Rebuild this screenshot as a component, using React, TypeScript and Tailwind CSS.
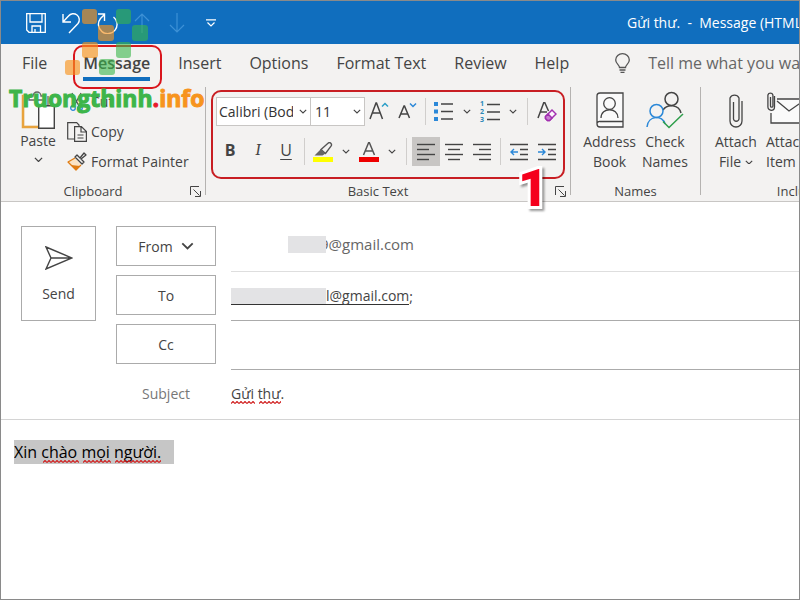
import type { ReactNode } from 'react'
import clsx from 'clsx'

const tabs = ['File', 'Message', 'Insert', 'Options', 'Format Text', 'Review', 'Help']

function Chevron({ className = 'w-[9px]' }: { className?: string }) {
  return (
    <svg viewBox="0 0 10 6" className={className} fill="none" stroke="#444" strokeWidth="1.4" aria-hidden="true">
      <path d="M1 1l4 4 4-4" />
    </svg>
  )
}

function Squiggle({ className }: { className: string }) {
  return (
    <svg className={clsx('absolute h-[3px]', className)} aria-hidden="true">
      <defs>
        <pattern id="squiggle" width="4" height="3" patternUnits="userSpaceOnUse">
          <path d="M0 2.5L2 .5l2 2" fill="none" stroke="#d02020" strokeWidth="1.2" />
        </pattern>
      </defs>
      <rect width="100%" height="3" fill="url(#squiggle)" />
    </svg>
  )
}

function Tool({ label, active, narrow, children }: { label: string; active?: boolean; narrow?: boolean; children: ReactNode }) {
  return (
    <button
      type="button"
      aria-label={label}
      className={clsx(
        'flex h-[29px] shrink-0 items-center justify-center text-[#444]',
        narrow ? 'w-[18px]' : 'w-7',
        active && 'bg-[#c8c6c4]'
      )}
    >
      {children}
    </button>
  )
}

function Divider({ wide }: { wide?: boolean }) {
  return <div className={clsx('h-[27px] w-px shrink-0 bg-[#d0cecc]', wide ? 'mx-[5px]' : 'mx-1')} />
}

function Lines({ rows }: { rows: [number, number][] }) {
  return (
    <svg width="18" height="18" viewBox="0 0 18 18" stroke="#444" strokeWidth="1.4" aria-hidden="true">
      {rows.map(([from, to], i) => (
        <path key={i} d={`M${from} ${1.5 + i * 5}H${to}`} />
      ))}
    </svg>
  )
}

function Group({ label, launcher, className, children }: { label: string; launcher?: boolean; className?: string; children: ReactNode }) {
  return (
    <section className={clsx('relative flex shrink-0 flex-col', className)} aria-label={label}>
      <div className="h-24">{children}</div>
      <div className={clsx('flex h-[18px] items-start justify-center text-[13px] leading-4 text-[#444]', launcher && 'pr-5')}>
        {label}
        {launcher && (
          <button type="button" aria-label={`${label} settings`} className="absolute right-1 bottom-1">
            <svg width="11" height="11" viewBox="0 0 11 11" fill="none" stroke="#444" aria-hidden="true">
              <path d="M.5 9V.5H9M3.5 3.5l6 6M10.5 5v5.5H5" />
            </svg>
          </button>
        )}
      </div>
    </section>
  )
}

function GroupLine() {
  return <div className="mb-1.5 w-px shrink-0 bg-[#b5b3b1]" />
}

function TitleBar() {
  return (
    <header className="flex h-[43px] items-center justify-between bg-[#106ebe] text-white">
      <div className="flex items-center pl-[25px]">
        <button type="button" aria-label="Save" className="w-[35px]">
          <svg width="20" height="20" viewBox="0 0 20 20" fill="none" stroke="white" strokeWidth="1.3" aria-hidden="true">
            <path d="M.7.7h18.6v18.6H3L.7 17zM4 1v8h12V1M6 19v-6h8.500v6M9 16v3" />
          </svg>
        </button>
        <button type="button" aria-label="Undo" className="w-[35px]">
          <svg width="20" height="22" viewBox="0 0 20 22" fill="none" stroke="white" strokeWidth="1.4" aria-hidden="true">
            <path d="M2 2v8h8M2 10l5.500-6a6 6 0 0 1 9.500 7.500L8 21" />
          </svg>
        </button>
        <button type="button" aria-label="Redo" className="w-[38px]">
          <svg width="22" height="22" viewBox="0 0 22 22" fill="none" stroke="white" strokeWidth="1.4" aria-hidden="true">
            <path d="M2 2h6.500v7M8.500 2.500L4.500 6.500A9.300 9.300 0 1 0 17.500 5" />
          </svg>
        </button>
        <button type="button" aria-label="Previous item" className="w-[35px]">
          <svg width="16" height="20" viewBox="0 0 16 20" fill="none" stroke="#3d91d6" strokeWidth="1.2" aria-hidden="true">
            <path d="M8 20V1M1 8l7-7 7 7" />
          </svg>
        </button>
        <button type="button" aria-label="Next item" className="w-[37px]">
          <svg width="16" height="20" viewBox="0 0 16 20" fill="none" stroke="#3d91d6" strokeWidth="1.2" aria-hidden="true">
            <path d="M8 0v19M1 12l7 7 7-7" />
          </svg>
        </button>
        <button type="button" aria-label="Customize toolbar">
          <svg width="10" height="8" viewBox="0 0 10 8" fill="none" stroke="white" strokeWidth="1.2" aria-hidden="true">
            <path d="M0 .8h10M1.500 3.500L5 7l3.500-3.500" />
          </svg>
        </button>
      </div>
      <h1 className="w-[172px] overflow-hidden text-[14px] whitespace-pre">Gửi thư.  -  Message (HTML)</h1>
    </header>
  )
}

function Tabs() {
  return (
    <nav className="flex h-[43px] items-center pl-[21px] text-[16px] leading-5 whitespace-nowrap text-[#444]">
      <div className="flex items-center gap-7">
        {tabs.map((tab) => (
          <button key={tab} type="button" className={clsx('relative pb-1.5', tab === 'Message' && 'ml-2 font-semibold')}>
            {tab}
            {tab === 'Message' && <span className="absolute inset-x-0 -bottom-0.5 h-1 bg-[#106ebe]" />}
            {tab === 'Message' && (
              <span className="absolute -top-2 -right-3 -bottom-2.5 -left-2.5 rounded-[10px] border-2 border-[#d9151c]" />
            )}
          </button>
        ))}
      </div>
      <button type="button" className="ml-[46px] flex items-center gap-[18px] pb-1.5 text-[#666]">
        <svg width="15" height="20" viewBox="0 0 15 20" fill="none" stroke="#555" strokeWidth="1.3" aria-hidden="true">
          <path d="M4.500 14.500c0-3-3.800-3.500-3.800-7.500a6.800 6.300 0 0 1 13.600 0c0 4-3.800 4.500-3.800 7.500zM4.500 17h6M5.500 19.300h4" />
        </svg>
        Tell me what you want to do
      </button>
    </nav>
  )
}

function Clipboard() {
  return (
    <Group label="Clipboard" launcher className="w-[204px]">
      <div className="flex text-[14px] leading-5 text-[#444]">
        <button type="button" className="flex w-[66px] flex-col items-center pt-1 pl-2">
          <svg width="36" height="40" viewBox="0 0 36 40" fill="none" aria-hidden="true">
            <path d="M11 5H3v31h15" stroke="#e8a33d" strokeWidth="2.500" />
            <path d="M5 7h24v8H19v19H5z" fill="#fafafa" />
            <path d="M9 9V5h4a4 4 0 0 1 8 0h4v4zM28 5v9" stroke="#666" strokeWidth="1.300" />
            <path d="M18.700 14.700h15.600v22.600H18.700z" fill="white" stroke="#444" strokeWidth="1.400" />
          </svg>
          Paste
          <Chevron className="mt-1.5 w-[9px]" />
        </button>
        <div className="flex flex-col whitespace-nowrap">
          <button type="button" className="flex h-[30px] items-center gap-1">
            <svg width="20" height="20" viewBox="0 0 20 20" fill="none" strokeWidth="1.300" aria-hidden="true">
              <path d="M5 1l7 13M14 1L7 14" stroke="#555" />
              <circle cx="6" cy="16" r="2.300" stroke="#2b88d8" />
              <circle cx="13" cy="16" r="2.300" stroke="#2b88d8" />
            </svg>
            Cut
          </button>
          <button type="button" className="flex h-[30px] items-center gap-1">
            <svg width="20" height="20" viewBox="0 0 20 20" fill="none" stroke="#444" strokeWidth="1.200" aria-hidden="true">
              <path d="M7 17H.700V.700h9L12 3v1M7.600 4.600h6.800l5 4.900v9.900H7.600zM14 5v5h5M10.500 13h6M10.500 16h6" />
            </svg>
            Copy
          </button>
          <button type="button" className="flex h-[30px] items-center gap-1">
            <svg width="20" height="20" viewBox="0 0 20 20" fill="none" strokeWidth="1.300" strokeLinejoin="round" aria-hidden="true">
              <path d="M8 6L1 10l8 8 5-5" stroke="#e07c12" fill="#fbe3c4" />
              <path d="M4 13l9 1-4 4z" fill="#e07c12" />
              <path d="M8 5l7 7 2-2-3-3 5-4-2-2-4 5-3-3z" stroke="#444" fill="#f3f2f1" />
            </svg>
            Format Painter
          </button>
        </div>
      </div>
    </Group>
  )
}

function BasicText() {
  return (
    <Group label="Basic Text" launcher className="w-[364px]">
      <div className="relative flex flex-col gap-[11px] pt-2.5 pl-2.5">
        <div className="flex items-center">
          <label className="relative flex w-[95px] items-center">
            <select aria-label="Font" className="h-[29px] w-full appearance-none overflow-hidden border border-[#c8c6c4] bg-white pr-[17px] pl-0.5 text-[14px] text-[#333]">
              <option>Calibri (Body)</option>
            </select>
            <Chevron className="absolute right-1 w-2" />
          </label>
          <label className="relative flex w-[54px] items-center">
            <select aria-label="Font size" className="h-[29px] w-full appearance-none border border-l-0 border-[#c8c6c4] bg-white pl-1 text-[14px] text-[#333]">
              <option>11</option>
            </select>
            <Chevron className="absolute right-1 w-2" />
          </label>
          <Tool label="Grow font">
            <svg width="20" height="20" viewBox="0 0 20 20" fill="none" stroke="#444" strokeWidth="1.500" aria-hidden="true">
              <path d="M1 17L7 1h.500l6 16M3 11h8.500" />
              <path d="M13 4.500l3-3 3 3" stroke="#2b9fc8" />
            </svg>
          </Tool>
          <Tool label="Shrink font">
            <svg width="20" height="20" viewBox="0 0 20 20" fill="none" stroke="#444" strokeWidth="1.500" aria-hidden="true">
              <path d="M2 16L7 4h.500l5 12M4 12h6.500" />
              <path d="M13 1.500l3 3 3-3" stroke="#2b88d8" />
            </svg>
          </Tool>
          <Divider />
          <Tool label="Bullets">
            <svg width="20" height="20" viewBox="0 0 20 20" aria-hidden="true">
              <path d="M0 0h4v4H0zM0 7.500h4v4H0zM0 15h4v4H0z" fill="#2b88d8" />
              <path d="M7 2h12M7 9.500h12M7 17h12" stroke="#444" strokeWidth="1.400" />
            </svg>
          </Tool>
          <Tool label="Bullet styles" narrow><Chevron className="w-2" /></Tool>
          <Tool label="Numbering">
            <span className="flex w-5 items-center gap-[3px]">
              <span className="flex flex-col text-[7px] leading-[8px] font-bold text-[#2b88b8]">
                <span>1</span>
                <span>2</span>
                <span>3</span>
              </span>
              <svg width="13" height="18" viewBox="0 0 13 18" stroke="#444" strokeWidth="1.400" aria-hidden="true">
                <path d="M0 1.500h13M0 9h13M0 16.500h13" />
              </svg>
            </span>
          </Tool>
          <Tool label="Numbering styles" narrow><Chevron className="w-2" /></Tool>
          <Divider wide />
          <Tool label="Clear formatting">
            <svg width="20" height="20" viewBox="0 0 20 20" fill="none" stroke="#444" strokeWidth="1.500" aria-hidden="true">
              <path d="M1 16L7 0h.500l4 9M3 10h7" />
              <path d="M8.500 14.500l6.500-6.500 4 4-6.500 6.500h-2l-2-2z" stroke="#a22fb0" fill="#fdf6fd" strokeWidth="1.500" />
              <path d="M8.500 14.500l2.500-2.500 4 4-2.500 2.500h-2l-2-2z" fill="#c77fd0" stroke="#a22fb0" />
            </svg>
          </Tool>
        </div>
        <div className="flex items-center">
          <Tool label="Bold"><b className="pb-1 text-[16px]">B</b></Tool>
          <Tool label="Italic"><i className="pb-1 font-serif text-[17px]">I</i></Tool>
          <Tool label="Underline"><span className="pb-1 text-[16px] underline underline-offset-3">U</span></Tool>
          <Divider />
          <Tool label="Highlight color">
            <svg width="20" height="20" viewBox="0 0 20 20" fill="none" aria-hidden="true">
              <path d="M0 15h20v5H0z" fill="#ffff00" />
              <path d="M8 7.500L15 1.200c2-1.600 4.500.800 3 3L12.500 11.500z" stroke="#555" strokeWidth="1.400" />
              <path d="M8 7l4.500 4.500-3 2H1.500z" fill="#666" />
            </svg>
          </Tool>
          <Tool label="Highlight colors" narrow><Chevron className="w-2" /></Tool>
          <Tool label="Font color">
            <svg width="20" height="20" viewBox="0 0 20 20" fill="none" aria-hidden="true">
              <path d="M0 15h20v5H0z" fill="#ee0000" />
              <path d="M4.500 13L9.700.500h.600L15.500 13M6.500 9h7" stroke="#555" strokeWidth="1.500" />
            </svg>
          </Tool>
          <Tool label="Font colors" narrow><Chevron className="w-2" /></Tool>
          <Divider wide />
          <Tool label="Align left" active><Lines rows={[[0, 18], [0, 12], [0, 18], [0, 12]]} /></Tool>
          <Tool label="Align center"><Lines rows={[[0, 18], [3, 15], [0, 18], [3, 15]]} /></Tool>
          <Tool label="Align right"><Lines rows={[[0, 18], [6, 18], [0, 18], [6, 18]]} /></Tool>
          <Divider />
          <Tool label="Decrease indent">
            <svg width="18" height="18" viewBox="0 0 18 18" fill="none" stroke="#444" strokeWidth="1.400" aria-hidden="true">
              <path d="M0 1.500h18M10 6.500h8M10 11.500h8M0 16.500h18" />
              <path d="M8 9H1M4 6L1 9l3 3" stroke="#2b88d8" />
            </svg>
          </Tool>
          <Tool label="Increase indent">
            <svg width="18" height="18" viewBox="0 0 18 18" fill="none" stroke="#444" strokeWidth="1.400" aria-hidden="true">
              <path d="M0 1.500h18M10 6.500h8M10 11.500h8M0 16.500h18" />
              <path d="M0 9h7M4 6l3 3-3 3" stroke="#2b88d8" />
            </svg>
          </Tool>
        </div>
        <div className="pointer-events-none absolute top-[3px] left-[5px] h-[89px] w-[354px] rounded-[10px] border-2 border-[#c81e23]" />
        <span className="pointer-events-none absolute top-[77px] left-[312px] font-['Roboto'] text-[52px] leading-[50px] font-black text-[#f5001d] drop-shadow-[2px_2px_1px_#0006] [-webkit-text-stroke:6px_white] [paint-order:stroke] [stroke-linejoin:round]">
          1
        </span>
      </div>
    </Group>
  )
}

function BigButton({ icon, children }: { icon: ReactNode; children: ReactNode }) {
  return (
    <button type="button" className="flex shrink-0 flex-col items-center text-center whitespace-nowrap">
      <span className="flex h-[45px] items-center">{icon}</span>
      {children}
    </button>
  )
}

function Names() {
  return (
    <Group label="Names" className="w-[129px]">
      <div className="flex justify-center gap-1.5 text-[14px] leading-5 text-[#444]">
        <BigButton
          icon={
            <svg width="28" height="36" viewBox="0 0 28 36" fill="none" stroke="#444" strokeWidth="1.300" aria-hidden="true">
              <path d="M27 1H4a3 3 0 0 0-3 3v28a3 3 0 0 0 3 3h23zM1 31.500A2.500 2.500 0 0 1 4 29.500h23" fill="#fafafa" />
              <circle cx="13.500" cy="11.500" r="5.800" />
              <path d="M5 26c0-11 17-11 17 0" />
            </svg>
          }
        >
          <span>Address</span>
          <span>Book</span>
        </BigButton>
        <BigButton
          icon={
            <svg width="38" height="38" viewBox="0 0 38 38" fill="none" strokeWidth="1.500" aria-hidden="true">
              <circle cx="25.500" cy="8" r="6.500" stroke="#444" />
              <path d="M17 19c4-6 16-6 18 3" stroke="#444" />
              <circle cx="10.500" cy="20" r="6.500" stroke="#2b88d8" fill="#f3f2f1" />
              <path d="M1 36c1-12 16-12 18-3" stroke="#2b88d8" />
              <path d="M17 30.500l6 6L37 23" stroke="#2e9e4b" />
            </svg>
          }
        >
          <span>Check</span>
          <span>Names</span>
        </BigButton>
      </div>
    </Group>
  )
}

function Include() {
  return (
    <Group label="Include" className="w-[196px]">
      <div className="flex gap-[9px] pl-3.5 text-[14px] leading-5 text-[#444]">
        <BigButton
          icon={
            <svg width="14" height="36" viewBox="0 0 14 36" fill="none" stroke="#444" strokeWidth="1.300" aria-hidden="true">
              <path d="M13 9v20a6 6 0 0 1-12 0V6a5 5 0 0 1 9 0v21a2.800 2.800 0 0 1-5.500 0V10" />
            </svg>
          }
        >
          <span>Attach</span>
          <span className="flex items-center gap-1">File <Chevron className="w-2" /></span>
        </BigButton>
        <BigButton
          icon={
            <svg width="40" height="38" viewBox="0 0 40 38" fill="none" stroke="#444" strokeWidth="1.300" aria-hidden="true">
              <path d="M10 8h29v24H4V22" fill="#fafafa" />
              <path d="M10 10l12 10L39 8" />
              <path d="M7.500 5v11a3.300 3.300 0 0 1-6.600 0V4a2.600 2.600 0 0 1 5 0v11a1.200 1.200 0 0 1-2.400 0V6" fill="#f3f2f1" />
            </svg>
          }
        >
          <span>Attach</span>
          <span className="flex items-center gap-1">Item <Chevron className="w-2" /></span>
        </BigButton>
      </div>
    </Group>
  )
}

function Watermark() {
  return (
    <div className="pointer-events-none absolute top-2 left-2">
      <svg width="86" height="68" viewBox="0 0 86 68" className="ml-14" aria-hidden="true">
        <g fill="#f7931e" fillOpacity=".65">
          <rect x="17" y="0" width="15" height="15" rx="3" />
          <rect x="33" y="16" width="16" height="16" rx="3" />
          <rect x="17" y="33" width="16" height="16" rx="3" />
          <rect y="51" width="15" height="15" rx="3" />
        </g>
        <g fill="#39b54a" fillOpacity=".6">
          <rect x="51" y="0" width="15" height="15" rx="3" />
          <rect x="67" y="16" width="16" height="16" rx="3" />
          <rect x="51" y="33" width="15" height="16" rx="3" />
          <rect x="34" y="50" width="16" height="16" rx="3" />
        </g>
      </svg>
      <div className="text-[23px] leading-[42px] font-bold text-[#3db54a] [-webkit-text-stroke:1px_currentColor]">
        Truongthinh<span className="text-[#e8192c]">.</span><span className="text-[#f7941d]">info</span>
      </div>
    </div>
  )
}

function AddressButton({ children }: { children: ReactNode }) {
  return (
    <button type="button" className="flex h-10 w-[100px] items-center justify-center gap-2 border border-[#ababab] text-[14px] text-[#444]">
      {children}
    </button>
  )
}

function Fields() {
  return (
    <div className="flex border-b border-[#d4d4d4] pl-5 text-[14px] text-[#444]">
      <button type="button" className="mt-6 flex h-[95px] w-[75px] shrink-0 flex-col items-center gap-3.5 border border-[#ababab] pt-[19px] leading-5">
        <svg width="28" height="24" viewBox="0 0 28 24" fill="none" stroke="#444" strokeWidth="1.400" aria-hidden="true">
          <path d="M1 1l26 11L1 23l5-11zM6 12h21" />
        </svg>
        Send
      </button>
      <div className="mt-6 ml-5 flex shrink-0 flex-col gap-[9px]">
        <AddressButton>
          From
          <Chevron className="w-[13px]" />
        </AddressButton>
        <AddressButton>To</AddressButton>
        <AddressButton>Cc</AddressButton>
        <label htmlFor="subject" className="flex h-10 items-center justify-center text-[#777]">Subject</label>
      </div>
      <div className="mt-5 ml-[15px] min-w-0 flex-1">
        <div className="flex h-[50px] items-center border-b border-[#dedede] pb-1 pl-[57px] text-[15px] text-[#666]">
          <span className="relative -mr-1.5 h-[17px] w-[38px] bg-[#e3e3e5]" />
          <span>9@gmail.com</span>
        </div>
        <div className="flex h-[49px] items-center border-b border-[#ababab]">
          <span className="flex items-center border-b border-[#333] leading-4">
            <span className="h-4 w-[95px] bg-[#e3e3e5]" />
            l@gmail.com
          </span>
          ;
          <input aria-label="To" className="min-w-0 flex-1 outline-none" />
        </div>
        <div className="h-[49px] border-b border-[#ababab]">
          <input aria-label="Cc" className="h-full w-full outline-none" />
        </div>
        <div className="relative h-[49px]">
          <input id="subject" defaultValue="Gửi thư." spellCheck={false} className="h-full w-full pb-0.5 outline-none" />
          <Squiggle className="bottom-[15px] left-0 w-6" />
          <Squiggle className="bottom-[15px] left-7 w-[22px]" />
        </div>
      </div>
    </div>
  )
}

export default function App() {
  return (
    <div className="relative flex min-h-screen flex-col overflow-hidden border border-[#8a8a8a] bg-white font-['Open_Sans','Noto_Sans',sans-serif]">
      <TitleBar />
      <div className="border-b border-[#c8c6c4] bg-[#f3f2f1]">
        <Tabs />
        <div className="flex overflow-x-clip">
          <Clipboard />
          <GroupLine />
          <BasicText />
          <GroupLine />
          <Names />
          <GroupLine />
          <Include />
        </div>
      </div>
      <Fields />
      <main className="relative flex flex-1 px-[13px] pt-5">
        <div className="absolute top-5 left-[13px] h-6 w-40 bg-[#c6c6c6]" />
        <textarea
          aria-label="Message body"
          defaultValue="Xin chào mọi người."
          spellCheck={false}
          className="relative w-full flex-1 resize-none bg-transparent text-[16px] leading-6 text-black outline-none"
        />
        <Squiggle className="top-10 left-[42px] w-9" />
        <Squiggle className="top-10 left-[82px] w-7" />
        <Squiggle className="top-10 left-[114px] w-[46px]" />
      </main>
      <Watermark />
    </div>
  )
}
